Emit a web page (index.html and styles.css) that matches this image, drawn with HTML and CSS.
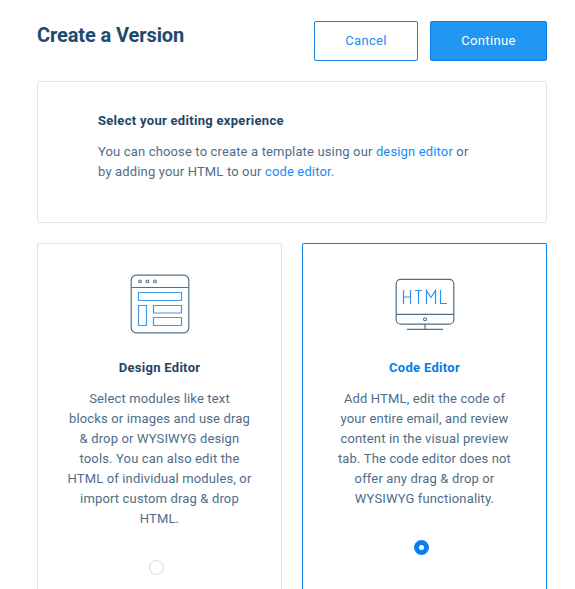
FILE: index.html
```html
<!DOCTYPE html>
<html lang="en">
<head>
<meta charset="utf-8">
<title>Create a Version</title>
<link rel="stylesheet" href="styles.css">
</head>
<body>
<main class="page">
  <header class="header">
    <h1 class="title">Create a Version</h1>
    <div class="actions">
      <button class="btn btn-cancel">Cancel</button>
      <button class="btn btn-primary">Continue</button>
    </div>
  </header>
  <section class="intro">
    <h2 class="heading">Select your editing experience</h2>
    <p class="copy">You can choose to create a template using our <a>design editor</a> or<br>by adding your HTML to our <a>code editor.</a></p>
  </section>
  <div class="cards">
    <article class="card">
      <svg class="icon" viewBox="0 0 80 80" fill="none">
        <rect x="11.2" y="10.2" width="57.6" height="57.6" rx="5" stroke="#546f83" stroke-width="1.2"/>
        <path d="M11 22.5H69" stroke="#546f83" stroke-width="1.2"/>
        <g stroke="#546f83" stroke-width="1.1"><circle cx="20" cy="16.4" r="1.4"/><circle cx="27.5" cy="16.4" r="1.4"/><circle cx="35" cy="16.4" r="1.4"/></g>
        <path d="M18.5 27.5h43v8h-43zM18.5 40.5h8v20h-8zM33.5 40.5h28v7.5h-28zM33.5 52.5h28v8h-28z" stroke="#4199ea" stroke-width="1.2"/>
      </svg>
      <h2 class="heading">Design Editor</h2>
      <p class="copy">Select modules like text<br>blocks or images and use drag<br>&amp; drop or WYSIWYG design<br>tools. You can also edit the<br>HTML of individual modules, or<br>import custom drag &amp; drop<br>HTML.</p>
      <span class="radio"></span>
    </article>
    <article class="card selected">
      <svg class="icon" viewBox="0 0 80 80" fill="none">
        <rect x="11.2" y="14.3" width="57.6" height="44.9" rx="4.5" stroke="#546f83" stroke-width="1.2"/>
        <path d="M11 49.3H69M40 59v5M22 64.3H58" stroke="#546f83" stroke-width="1.2"/>
        <circle cx="40" cy="54.3" r="1.5" stroke="#546f83" stroke-width="1.1"/>
        <path d="M18.5 25v14M25.5 25v14M18.5 32h7M30 25.5h7M33.5 25.5V39M41.5 39V25.5L46 32.5l4.5-7V39M55.5 25v13.5H62" stroke="#2f93ee" stroke-width="1.2"/>
      </svg>
      <h2 class="heading">Code Editor</h2>
      <p class="copy">Add HTML, edit the code of<br>your entire email, and review<br>content in the visual preview<br>tab. The code editor does not<br>offer any drag &amp; drop or<br>WYSIWYG functionality.</p>
      <span class="radio checked"></span>
    </article>
  </div>
</main>
</body>
</html>
```
FILE: styles.css
```css
* { box-sizing: border-box; }
body {
  margin: 0;
  background: #fff;
  color: #4f6d88;
  font: 13px/20px Roboto, sans-serif;
}
h1, h2, p { margin: 0; }
.page { display: flex; flex-direction: column; height: 589px; padding: 21px 28px 0 37px; }
.header { display: flex; flex: none; justify-content: space-between; height: 60px; }
.title { color: #1f4a6b; font-size: 20px; line-height: 28px; font-weight: 700; letter-spacing: -.1px; white-space: nowrap; }
.actions { display: flex; gap: 12px; }
.btn {
  width: 104px;
  height: 40px;
  padding: 0;
  border: 1px solid #1a82e2;
  border-radius: 2px;
  background: #fff;
  color: #188bf6;
  font: 400 13px/38px Roboto, sans-serif;
  letter-spacing: .35px;
}
.btn-primary { width: 117px; background: #2196f3; border-color: #0a7de8; color: #fff; }
.intro { flex: none; height: 142px; padding: 29px 60px; border: 1px solid #e0e1e3; border-radius: 2px; }
.heading { color: #1f4663; font-size: 13px; line-height: 20px; font-weight: 700; letter-spacing: .3px; }
.copy { margin-top: 11px; letter-spacing: .15px; white-space: nowrap; }
.copy a { color: #188bf6; }
.cards { display: grid; flex: 1; grid-template-columns: 245px 245px; gap: 20px; margin-top: 20px; }
.card {
  display: flex;
  flex-direction: column;
  align-items: center;
  padding-top: 21px;
  border: 1px solid #e0e1e3;
  border-bottom: 0;
  border-radius: 2px 2px 0 0;
  text-align: center;
}
.selected { border-color: #0a80e8; }
.selected .heading { color: #007ee9; }
.icon { width: 80px; height: 80px; margin-bottom: 13px; }
.radio { width: 15px; height: 15px; margin: 31px 6px 0 0; border: 1px solid #d3dae1; border-radius: 50%; }
.checked { border: 5px solid #0a80ee; }
```
